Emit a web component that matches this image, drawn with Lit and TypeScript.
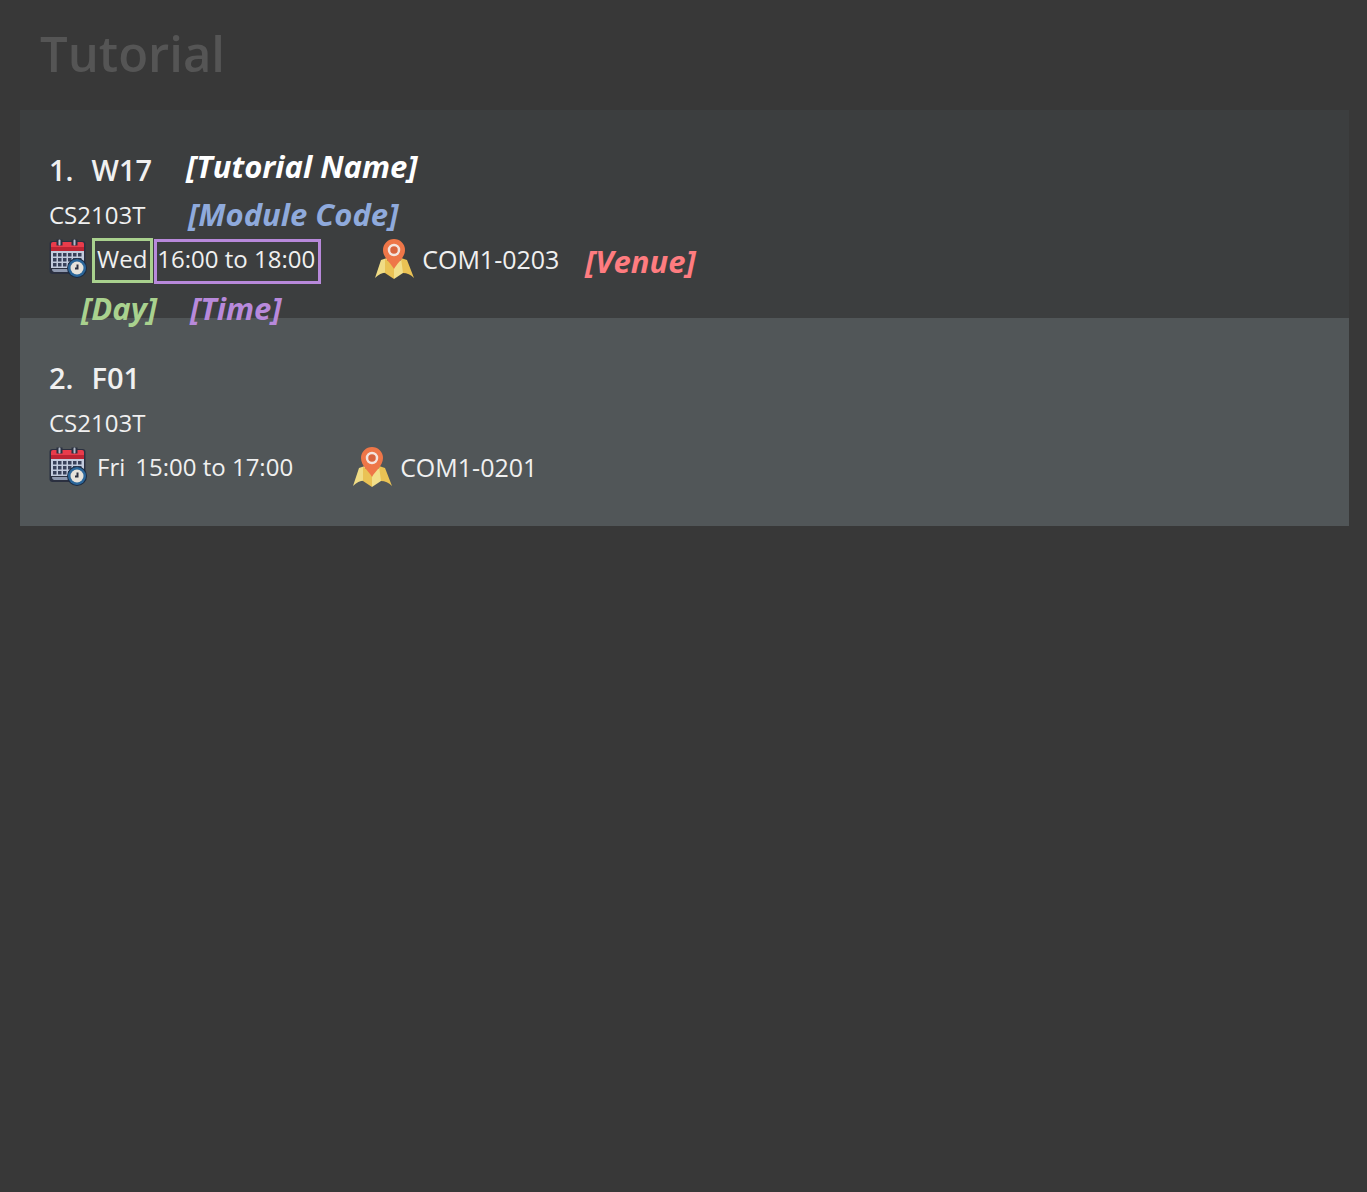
import { LitElement, html, css, svg, nothing } from "lit";
import { customElement, property } from "lit/decorators.js";

interface Tutorial {
  name: string;
  code: string;
  day: string;
  time: string;
  venue: string;
}

const TUTORIALS: Tutorial[] = [
  { name: "W17", code: "CS2103T", day: "Wed", time: "16:00 to 18:00", venue: "COM1-0203" },
  { name: "F01", code: "CS2103T", day: "Fri", time: "15:00 to 17:00", venue: "COM1-0201" },
];

const calendarIcon = html`
  <svg class="icon" viewBox="0 0 40 40" aria-hidden="true">
    <rect x="0.5" y="2" width="36" height="33" rx="3" fill="#2b3040" />
    <path d="M2 12h33v17H2z" fill="#c3cbdd" />
    <path d="M3 30h17l1 3H5a3 3 0 0 1-2-3z" fill="#8e98ae" />
    <path d="M2 11V5a2 2 0 0 1 2-2h29a2 2 0 0 1 2 2v6z" fill="#e93c4b" />
    <path d="M2 8h33v4H2z" fill="#bd2433" />
    ${[4, 9, 14, 19, 24, 29].map((x) =>
      [14, 19, 24].map((y) => svg`<rect x=${x} y=${y} width="3.500" height="3.500" fill="#39415a" />`)
    )}
    <path d="M7.500 0.500h6v6h-6zM22.500 0.500h6v6h-6z" fill="#2b3040" />
    <path d="M10.500 1.500v4M25.500 1.500v4" stroke="#b4bccb" stroke-width="2" stroke-linecap="round" />
    <circle cx="28" cy="29" r="10" fill="#1c2b42" />
    <circle cx="28" cy="29" r="9" fill="#2b6699" />
    <circle cx="28" cy="29" r="6.500" fill="#e6e2da" />
    <path d="M28.500 25.500v4h-2.500" stroke="#2b3040" stroke-width="2" fill="none" />
  </svg>
`;

const mapIcon = html`
  <svg class="icon" viewBox="0 0 40 40" aria-hidden="true">
    <path d="M7 21l6-2 1 15q-7-1-13 5z" fill="#f0dc85" />
    <path d="M11 20l9 5v15l-9-6z" fill="#eac254" />
    <path d="M29 20l-9 5v15l9-6z" fill="#f2df8a" />
    <path d="M27 19l6 2 7 18q-5-5-11-5z" fill="#eac254" />
    <path d="M20 30C17 24 9 19 9 11a11 11 0 0 1 22 0c0 8-8 13-11 19z" fill="#ee7648" />
    <circle cx="20" cy="11" r="5" fill="#d9653f" stroke="#f4e4de" stroke-width="2.500" />
  </svg>
`;

@customElement("tutorial-card")
class TutorialCard extends LitElement {
  @property({ attribute: false }) tutorial!: Tutorial;
  @property({ type: Number }) index = 1;
  @property({ type: Boolean, reflect: true }) annotated = false;

  static styles = css`
    :host {
      display: block;
      position: relative;
      padding: 37px 29px;
      background: #515658;
      color: #f0f0f0;
      font: 24px/46px "Open Sans", "Noto Sans", sans-serif;
    }
    :host([annotated]) {
      background: #3c3e3f;
      z-index: 1;
    }
    .name {
      display: flex;
      gap: 18px;
      margin: 0;
      font-size: 29px;
      font-weight: 600;
      line-height: 46px;
    }
    .code {
      margin: 0;
      line-height: 44px;
    }
    .details {
      display: flex;
      align-items: center;
      gap: 59px;
      height: 44px;
    }
    .item {
      display: flex;
      align-items: center;
      gap: 8px;
      white-space: nowrap;
    }
    .time {
      margin-left: 2px;
    }
    .venue {
      font-size: 25px;
    }
    .icon {
      display: block;
      width: 40px;
      height: 40px;
    }
    .mark {
      position: absolute;
      box-sizing: border-box;
      border: 3px solid;
      height: 45px;
    }
    .box-day {
      left: 72px;
      top: 128px;
      width: 61px;
      color: #a9d18e;
    }
    .box-time {
      left: 134px;
      top: 129px;
      width: 167px;
      color: #b889db;
    }
    .note {
      position: absolute;
      font: italic 700 31px/40px "Open Sans", "Noto Sans", sans-serif;
      white-space: nowrap;
    }
    .note-name { left: 166px; top: 36px; color: #ffffff; }
    .note-code { left: 168px; top: 84px; color: #8faadc; }
    .note-venue { left: 565px; top: 131px; color: #ff7c80; }
    .note-day { left: 61px; top: 178px; color: #a9d18e; }
    .note-time { left: 170px; top: 178px; color: #b889db; }
  `;

  render() {
    const t = this.tutorial;
    return html`
      <h2 class="name"><span>${this.index}.</span><span>${t.name}</span></h2>
      <p class="code">${t.code}</p>
      <div class="details">
        <div class="item">${calendarIcon}<span>${t.day}</span><span class="time">${t.time}</span></div>
        <div class="item venue">${mapIcon}<span>${t.venue}</span></div>
      </div>
      ${this.annotated
        ? html`
            <span class="mark box-day"></span>
            <span class="mark box-time"></span>
            <span class="note note-name">[Tutorial Name]</span>
            <span class="note note-code">[Module Code]</span>
            <span class="note note-venue">[Venue]</span>
            <span class="note note-day">[Day]</span>
            <span class="note note-time">[Time]</span>
          `
        : nothing}
    `;
  }
}

@customElement("app-root")
class AppRoot extends LitElement {
  static styles = css`
    :host {
      display: block;
      box-sizing: border-box;
      min-height: 100vh;
      padding: 0 18px 20px 20px;
      background: #383838;
      font-family: "Open Sans", "Noto Sans", sans-serif;
    }
    .title {
      margin: 0;
      padding: 18px 20px 22px;
      color: #555555;
      font-size: 49px;
      font-weight: 600;
      line-height: 70px;
    }
  `;

  render() {
    return html`
      <h1 class="title">Tutorial</h1>
      <main>
        ${TUTORIALS.map(
          (t, i) => html`<tutorial-card .tutorial=${t} .index=${i + 1} ?annotated=${i === 0}></tutorial-card>`
        )}
      </main>
    `;
  }
}
